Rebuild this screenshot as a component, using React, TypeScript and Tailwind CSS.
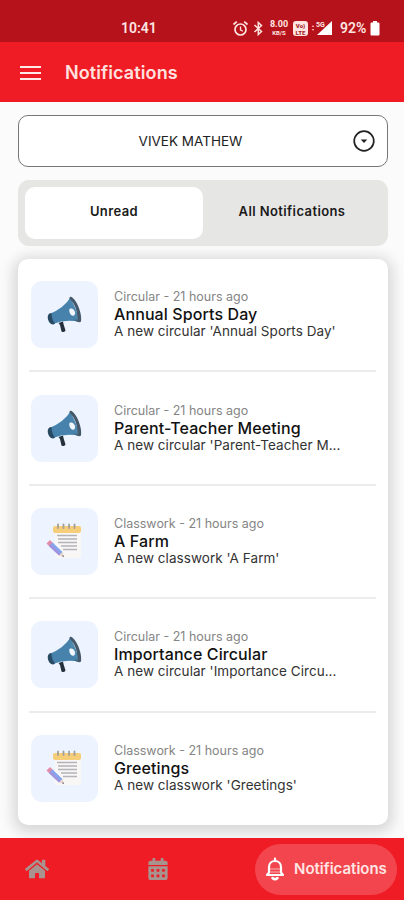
import { FaHome, FaCalendarAlt } from "react-icons/fa";

type NotificationProps = {
  type: "Circular" | "Classwork";
  title: string;
  text: string;
}

const notifications: NotificationProps[] = [
  { type: "Circular", title: "Annual Sports Day", text: "A new circular 'Annual Sports Day'" },
  { type: "Circular", title: "Parent-Teacher Meeting", text: "A new circular 'Parent-Teacher M..." },
  { type: "Classwork", title: "A Farm", text: "A new classwork 'A Farm'" },
  { type: "Circular", title: "Importance Circular", text: "A new circular 'Importance Circu..." },
  { type: "Classwork", title: "Greetings", text: "A new classwork 'Greetings'" },
];

const Megaphone = () => (
  <svg className="mt-[3px]" width="36" height="40" viewBox="0 0 36 40">
    <path d="M11.500 27 L16 25.500 L16.500 28 L18.500 34.500 Q17 37 14.500 35.500 L13 29 Z" fill="#24303c" />
    <path d="M2.500 18 Q17 12 23.500 1.500 L33 26 Q19 22.500 6 28 Q1.500 24 2.500 18 Z" fill="#4682ab" />
    <path d="M2.500 17.500 Q0 19 1 23.500 Q2.500 28.500 6.500 28.500 L8 27.500 Q4.500 23.500 4.500 17 Z" fill="#294a63" />
    <path d="M22.500 3 Q22 .5 24 .8 C29.500 3 35.500 18 34 25.500 Q32 27.500 28 24.500 C32 20 29 8 22.500 3 Z" fill="#45596b" />
    <path d="M23 3 C27.500 8 32 20 30.500 25 C26.500 21.500 22 10 23 3 Z" fill="#4d87ae" />
    <path d="M22.500 13 C26.500 11 30 17.500 27 19.500 C24 21 21.500 16 22.500 13 Z" fill="#f2f7fd" />
  </svg>
)

const Notepad = () => (
  <svg className="mr-[1px]" width="38" height="38" viewBox="0 0 38 38">
    <rect x="10" y="6" width="26" height="30" rx="2" fill="#f8f7f6" />
    <rect x="8" y="4" width="28" height="7" rx="2" fill="#f6cd78" />
    <path d="M13 6V2.500M18.500 6V2.500M24 6V2.500M29.500 6V2.500" stroke="#a39e9b" strokeWidth="1.800" strokeLinecap="round" />
    <path d="M12 13.500H32M13 17H32M13 20.500H32M16 24H32M18 27.500H32" stroke="#b3b3b8" strokeWidth="1.600" />
    <path d="M1.500 21.500 L5 18 L9 22 L5.500 25.500 Z" fill="#e18da7" />
    <path d="M4 24 L7.500 20.500 L17.500 30 L14 33.500 Z" fill="#83a5ef" />
    <path d="M4 24 L5.800 22.200 L15.700 31.800 L14 33.500 Z" fill="#a393dc" />
    <path d="M14 33.500 L17.500 30 L19 35 Z" fill="#e7d5cd" />
    <path d="M17 34.300 L18.400 33 L19 35 Z" fill="#67616c" />
  </svg>
)

const Bell = () => (
  <svg width="20" height="24" viewBox="0 0 20 24" fill="none" stroke="#fff" strokeWidth="2.200" strokeLinecap="round" strokeLinejoin="round">
    <path d="M10 1.500V3.500M2 18 L4 15.500V10C4 6.500 6.500 4 10 4S16 6.500 16 10V15.500L18 18Z" />
    <path d="M5 12H15M5 15H15" strokeWidth="1" opacity=".6" />
    <path d="M7.500 21 Q10 23.500 12.500 21" strokeWidth="2.500" />
  </svg>
)

const StatusBar = () => (
  <div className="relative h-[42px] shrink-0 bg-[#b5121b] font-['Roboto',sans-serif] text-[#ffe5e1]">
    <span className="absolute left-[121px] top-[19px] text-[14px] leading-[18px] font-semibold">10:41</span>
    <div className="absolute left-[232px] top-[19px] flex h-[18px] items-center">
      <svg width="17" height="17" viewBox="0 0 17 17" fill="none" stroke="currentColor" strokeWidth="1.700">
        <circle cx="8.500" cy="9.500" r="5.500" />
        <path d="M8.500 6.500V9.800L10.800 11.200" strokeWidth="1.300" />
        <path d="M1.500 4.500L4.800 1.700M15.500 4.500L12.200 1.700" />
      </svg>
      <svg className="ml-[3px]" width="13" height="15" viewBox="0 0 13 15" fill="none" stroke="currentColor" strokeWidth="1.500">
        <path d="M2.500 4L9.500 10.500L6.300 13.500V1.500L9.500 4.500L2.500 11" />
      </svg>
      <div className="ml-[4px] w-[20px] text-center font-bold">
        <div className="text-[9px] leading-[9px]">8.00</div>
        <div className="text-[6px] leading-[7px]">KB/S</div>
      </div>
      <div className="ml-[4px] h-[15px] w-[15px] rounded-[3px] bg-[#ffe5e1] pt-[1px] text-center text-[6px] leading-[7px] font-black text-[#a5272b]">
        <div>Vo)</div>
        <div>LTE</div>
      </div>
      <svg className="ml-[3px]" width="22" height="16" viewBox="0 0 22 16">
        <path d="M21 1V15H6Z" fill="#fff" />
        <path d="M2 5L3.300 7H.7ZM2 11L3.300 9H.7Z" fill="#ffb0a5" />
        <text x="5" y="6.500" fontSize="7" fontWeight="700" fill="#ffe5e1">5G</text>
      </svg>
      <span className="ml-[7px] w-[27px] text-[14px] leading-[18px] font-semibold">92%</span>
      <svg className="ml-[3px]" width="10" height="15" viewBox="0 0 10 15">
        <path d="M3 0H7V1.500H8.500Q9.500 1.500 9.500 2.500V13.500Q9.500 14.500 8.500 14.500H1.500Q.5 14.500 .5 13.500V2.500Q.5 1.500 1.500 1.500H3Z" fill="#fff" />
      </svg>
    </div>
  </div>
)

const NotificationRow = ({ type, title, text }: NotificationProps) => {
  return (
    <div className="flex h-[113.400px] items-center border-b-2 border-[#ececec] pl-[2px] last:border-transparent">
      <div className="flex h-[67px] w-[67px] shrink-0 items-center justify-center rounded-[11px] bg-[#edf4ff]">
        {type === "Circular" ? <Megaphone /> : <Notepad />}
      </div>
      <div className="ml-[16px] whitespace-nowrap">
        <div className="text-[12.500px] leading-[16px] text-[#858585]">{type} - 21 hours ago</div>
        <div className="text-[16px] leading-[18px] font-medium tracking-[0.100px] text-[#111]">{title}</div>
        <div className="text-[13.500px] leading-[17px] tracking-[0.050px] text-[#333]">{text}</div>
      </div>
    </div>
  )
}

const App = () => {
  return (
    <div className="flex h-[900px] w-[404px] flex-col overflow-hidden bg-[#fbfbfb] font-['Inter',sans-serif]">
      <StatusBar />
      <header className="flex h-[60px] shrink-0 items-center bg-[#ef1c25] pl-[20px]">
        <div className="flex w-[21px] flex-col gap-[4px] pt-[1px]">
          <div className="h-[2px] bg-[#ffe9e6]" />
          <div className="h-[2px] bg-[#ffe9e6]" />
          <div className="h-[2px] bg-[#ffe9e6]" />
        </div>
        <h1 className="ml-[24px] pt-[1px] text-[18px] font-semibold tracking-[0.100px] text-[#ffe2df]">Notifications</h1>
      </header>

      <main className="flex flex-1 flex-col px-[18px] pt-[13px]">
        <button className="flex h-[52px] w-[370px] shrink-0 items-center rounded-[10px] border border-[#777] bg-white pr-[12px]">
          <span className="flex-1 pl-[9px] text-center text-[13.500px] text-[#222]">VIVEK MATHEW</span>
          <svg width="22" height="22" viewBox="0 0 22 22">
            <circle cx="11" cy="11" r="9.800" fill="none" stroke="#222" strokeWidth="1.700" />
            <path d="M7.700 9.500H14.300L11 13Z" fill="#222" />
          </svg>
        </button>

        <div className="mt-[13px] flex h-[66px] w-[370px] shrink-0 rounded-[11px] bg-[#e6e6e5] p-[7px] text-[13px] font-semibold tracking-[0.400px] text-[#1a1a1a]">
          <button className="w-[178px] rounded-[10px] bg-white pb-[3px]">Unread</button>
          <button className="flex-1 pb-[3px]">All Notifications</button>
        </div>

        <div className="mt-[13px] h-[566px] w-[370px] shrink-0 rounded-[10px] bg-white pr-[12px] pl-[11px] shadow-[0_3px_14px_5px_rgba(0,0,0,0.14)]">
          {notifications.map((item) => (
            <NotificationRow key={item.title} {...item} />
          ))}
        </div>
      </main>

      <nav className="relative flex h-[62px] shrink-0 items-center bg-[#ef1c25]">
        <FaHome className="ml-[25px] size-[24px] text-[#a8938e]" />
        <FaCalendarAlt className="ml-[98px] size-[22px] text-[#a8938e]" />
        <div className="ml-auto mr-[7px] flex h-[51px] w-[142px] items-center rounded-full bg-[#f3454e] pl-[10px]">
          <Bell />
          <span className="ml-[9px] text-[15px] font-semibold text-[#ffe5e3]">Notifications</span>
        </div>
      </nav>
    </div>
  )
}

export default App
